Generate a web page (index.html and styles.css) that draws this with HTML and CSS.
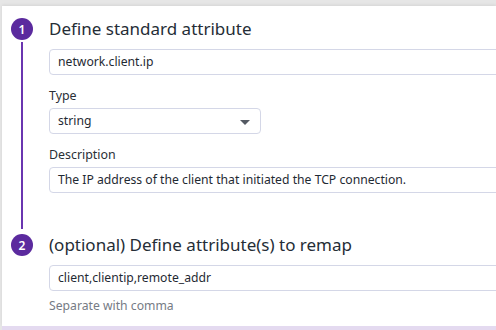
FILE: index.html
```html
<!DOCTYPE html>
<html>
<head>
<meta charset="utf-8">
<link rel="stylesheet" href="styles.css">
</head>
<body>
<div class="frame">
  <div class="panel">
    <div class="step step-first">
      <div class="marker">
        <div class="num">1</div>
        <div class="rail"></div>
      </div>
      <div class="content">
        <div class="title">Define standard attribute</div>
        <div class="input wide">network.client.ip</div>
        <div class="field">
          <div class="label">Type</div>
          <div class="input select">string<span class="caret"></span></div>
        </div>
        <div class="field">
          <div class="label">Description</div>
          <div class="input wide">The IP address of the client that initiated the TCP connection.</div>
        </div>
      </div>
    </div>
    <div class="step">
      <div class="marker">
        <div class="num">2</div>
      </div>
      <div class="content">
        <div class="title">(optional) Define attribute(s) to remap</div>
        <div class="input wide">client,clientip,remote_addr</div>
        <div class="hint">Separate with comma</div>
      </div>
    </div>
  </div>
  <div class="band"></div>
</div>
</body>
</html>
```

FILE: styles.css
```css
html, body {
  margin: 0;
  padding: 0;
  width: 496px;
  height: 330px;
  overflow: hidden;
  background: #e6e6e6;
  font-family: "Noto Sans", "Open Sans", sans-serif;
}
.frame {
  padding: 6px 0 0 2px;
  width: 494px;
  overflow: hidden;
}
.panel {
  background: #ffffff;
  height: 320px;
  box-sizing: border-box;
  padding-top: 12px;
  box-shadow: 0 -1px 3px rgba(0,0,0,0.08);
  overflow: hidden;
}
.band {
  height: 4px;
  background: #e4daf0;
}
.step {
  display: grid;
  grid-template-columns: 47px 1fr;
}
.step-first {
  padding-bottom: 41px;
}
.marker {
  display: flex;
  flex-direction: column;
  align-items: center;
  width: 40px;
}
.num {
  width: 22px;
  height: 22px;
  border-radius: 50%;
  background: #5b2a9e;
  color: #fff;
  font-size: 12px;
  font-weight: 600;
  display: flex;
  align-items: center;
  justify-content: center;
}
.rail {
  flex: 1;
  width: 2px;
  background: #6a35b0;
  margin-top: 2px;
  margin-bottom: -36px;
}
.content {
  display: flex;
  flex-direction: column;
  min-width: 0;
}
.title {
  font-size: 17px;
  line-height: 22px;
  color: #252d36;
}
.input {
  box-sizing: border-box;
  height: 26px;
  border: 1px solid #d4d7e7;
  border-radius: 4px;
  padding: 0 8px;
  font-size: 12.2px;
  line-height: 24px;
  color: #1f2a33;
  margin-top: 9px;
  white-space: nowrap;
}
.wide {
  width: 520px;
}
.field {
  margin-top: 12px;
}
.label {
  font-size: 12.4px;
  line-height: 18px;
  color: #2a2f36;
}
.field .input {
  margin-top: 3px;
}
.select {
  width: 212px;
  position: relative;
}
.caret {
  position: absolute;
  right: 10px;
  top: 11px;
  width: 0;
  height: 0;
  border-left: 5px solid transparent;
  border-right: 5px solid transparent;
  border-top: 5px solid #545a63;
}
.hint {
  margin-top: 6px;
  font-size: 12.2px;
  line-height: 18px;
  color: #767b85;
}
```
